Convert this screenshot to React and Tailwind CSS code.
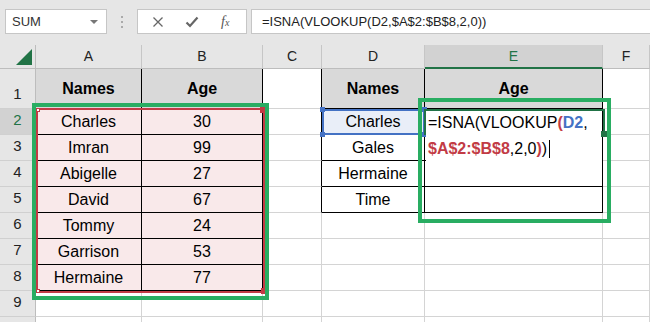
import React from "react";

const cols = ["A", "B", "C", "D", "E", "F"];
const names = [
  ["Charles", "30"],
  ["Imran", "99"],
  ["Abigelle", "27"],
  ["David", "67"],
  ["Tommy", "24"],
  ["Garrison", "53"],
  ["Hermaine", "77"],
];
const lookup = ["Charles", "Gales", "Hermaine", "Time"];
const rows = [1, 2, 3, 4, 5, 6, 7, 8, 9, 10];

const cellText = (r, c) => {
  if (r === 1) {
    if (c === "A" || c === "D") return "Names";
    if (c === "B" || c === "E") return "Age";
    return "";
  }
  if (r <= 8 && c === "A") return names[r - 2][0];
  if (r <= 8 && c === "B") return names[r - 2][1];
  if (r <= 5 && c === "D") return lookup[r - 2];
  return "";
};

const cellClass = (r, c) => {
  const inLeft = (c === "A" || c === "B") && r <= 8;
  const inRight = (c === "D" || c === "E") && r <= 5;
  let bg = "bg-white";
  if (r === 1 && (inLeft || inRight)) bg = "bg-[#d9d9d9] font-bold";
  else if (inLeft) bg = "bg-[#f9e9ea]";
  else if (r === 2 && c === "D") bg = "bg-[#e9eef8]";
  const right = inLeft || inRight || (c === "C" && r <= 5) ? "border-r-black" : "border-r-[#d4d4d4]";
  const bottom = inLeft || inRight ? "border-b-black" : "border-b-[#d4d4d4]";
  return `${bg} ${right} ${bottom}`;
};

const Handle = ({ className }) => <div className={`absolute ${className}`} />;

export default function App() {
  return (
    <div className="w-[650px] h-[322px] overflow-hidden bg-white font-['Liberation_Sans',Arial,sans-serif] text-black">
      {/* formula bar */}
      <div className="h-[45px] bg-[#e6e6e6] flex items-start pt-[9px] pl-[5px] overflow-hidden">
        <div className="w-[102px] h-[25px] shrink-0 bg-white border border-[#c6c6c6] flex items-center justify-between pl-[6px] pr-[8px] text-[13px] text-[#333]">
          <span>SUM</span>
          <span className="w-0 h-0 border-l-[4px] border-r-[4px] border-t-[4px] border-l-transparent border-r-transparent border-t-[#777]" />
        </div>
        <div className="w-[30px] h-[25px] shrink-0 flex flex-col items-center justify-center gap-[3px]">
          <span className="w-[2px] h-[2px] bg-[#aaa]" />
          <span className="w-[2px] h-[2px] bg-[#aaa]" />
          <span className="w-[2px] h-[2px] bg-[#aaa]" />
        </div>
        <div className="w-[110px] h-[25px] shrink-0 bg-white border border-[#c6c6c6] flex items-center pl-[14px]">
          <svg width="12" height="12" viewBox="0 0 12 12">
            <path d="M1.5 1.5 L10.5 10.5 M10.5 1.5 L1.5 10.5" stroke="#666" strokeWidth="1.3" fill="none" />
          </svg>
          <svg width="14" height="12" viewBox="0 0 14 12" className="ml-[21px]">
            <path d="M1.5 6.5 L5 10 L12.5 1.5" stroke="#666" strokeWidth="2.2" fill="none" />
          </svg>
          <span className="ml-[22px] font-['Liberation_Serif',serif] italic text-[14px] text-[#555] leading-none">
            f<span className="text-[10px]">x</span>
          </span>
        </div>
        <div className="w-[402px] h-[25px] shrink-0 ml-[4px] bg-white border border-[#c6c6c6] flex items-center pl-[10px] text-[13px] text-[#222]">
          =ISNA(VLOOKUP(D2,$A$2:$B$8,2,0))
        </div>
      </div>

      {/* sheet */}
      <div className="relative">
        <div className="grid grid-cols-[36px_106px_121px_59px_103px_178px_1fr] grid-rows-[24px_40px_repeat(9,26px)]">
          <div className="bg-[#e6e6e6] border-r border-b border-[#bdbdbd] flex items-end justify-end pr-[3px] pb-[3px]">
            <svg width="16" height="16" viewBox="0 0 16 16">
              <path d="M16 0 L16 16 L0 16 Z" fill="#217346" />
            </svg>
          </div>
          {cols.map((c) => (
            <div
              key={c}
              className={`flex items-center justify-center text-[14px] border-r border-[#c6c6c6] ${
                c === "E"
                  ? "bg-[#d2d2d2] text-[#217346] border-b-2 border-b-[#217346]"
                  : "bg-[#e6e6e6] text-[#222] border-b border-b-[#bdbdbd]"
              }`}
            >
              {c}
            </div>
          ))}
          {rows.map((r) => (
            <React.Fragment key={r}>
              <div
                className={`flex items-end justify-center pb-[3px] text-[15px] border-r border-r-[#bdbdbd] border-b border-b-[#d0d0d0] ${
                  r === 2 ? "bg-[#d2d2d2] text-[#217346]" : "bg-[#e6e6e6] text-[#222]"
                }`}
              >
                {r < 10 ? r : ""}
              </div>
              {cols.map((c) => (
                <div
                  key={c}
                  className={`flex items-center justify-center text-[16px] leading-none border-r border-b ${cellClass(r, c)}`}
                >
                  {cellText(r, c)}
                </div>
              ))}
            </React.Fragment>
          ))}
        </div>

        {/* referenced range $A$2:$B$8 */}
        <div className="absolute left-[36px] top-[63px] w-[229px] h-[185px] border-2 border-[#c23b45]" />
        <Handle className="left-[36px] top-[63px] w-[4px] h-[4px] bg-white border border-[#c23b45]" />
        <Handle className="left-[36px] top-[244px] w-[4px] h-[4px] bg-white border border-[#c23b45]" />
        <Handle className="left-[260px] top-[62px] w-[6px] h-[6px] bg-[#c23b45]" />
        <Handle className="left-[261px] top-[243px] w-[6px] h-[6px] bg-[#c23b45]" />

        {/* referenced cell D2 */}
        <div className="absolute left-[322px] top-[64px] w-[103px] h-[26px] border-2 border-[#4472c4]" />
        <Handle className="left-[320px] top-[62px] w-[5px] h-[5px] bg-[#4472c4]" />
        <Handle className="left-[320px] top-[87px] w-[5px] h-[5px] bg-[#4472c4]" />
        <Handle className="left-[422px] top-[62px] w-[5px] h-[5px] bg-[#4472c4]" />
        <Handle className="left-[422px] top-[87px] w-[5px] h-[5px] bg-[#4472c4]" />

        {/* cell E2 in edit mode */}
        <div className="absolute left-[426px] top-[65px] w-[176px] h-[51px] bg-white pl-[2px] text-[16px] leading-[26px] whitespace-nowrap">
          <div>
            =ISNA(VLOOKUP<span className="text-[#c23b45] font-bold">(</span>
            <span className="text-[#4472c4] font-bold">D2</span>,
          </div>
          <div className="flex items-center">
            <span className="text-[#c23b45] font-bold">$A$2:$B$8</span>,2,0
            <span className="text-[#c23b45] font-bold">)</span>)
            <span className="inline-block w-px h-[18px] bg-black ml-[2px]" />
          </div>
        </div>
        <div className="absolute left-[424px] top-[64px] w-[181px] h-[26px] border-t-2 border-l-2 border-r-2 border-[#217346]" />
        <Handle className="left-[601px] top-[86px] w-[6px] h-[6px] bg-[#217346]" />

        {/* annotation boxes */}
        <div className="absolute left-[32px] top-[58px] w-[237px] h-[197px] border-4 border-[#29ad62]" />
        <div className="absolute left-[418px] top-[53px] w-[193px] h-[125px] border-4 border-[#29ad62]" />
      </div>
    </div>
  );
}
